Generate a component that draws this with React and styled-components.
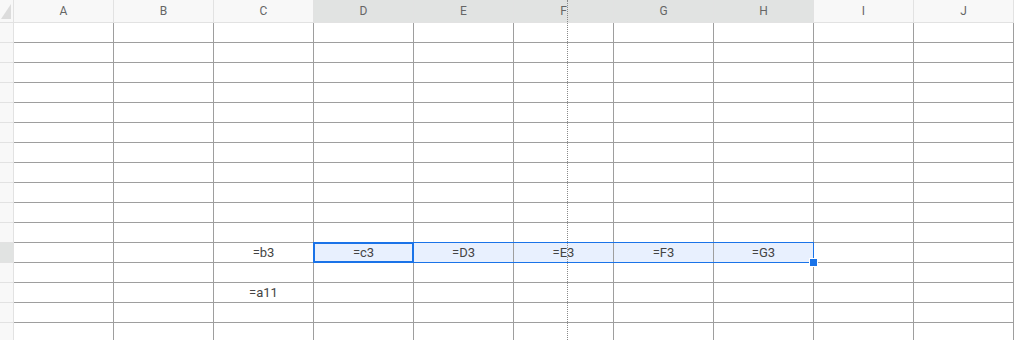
import React from 'react';
import styled, {createGlobalStyle} from 'styled-components';

const COLS = ['A', 'B', 'C', 'D', 'E', 'F', 'G', 'H', 'I', 'J'];
const ROW_COUNT = 16;
const SEL_ROW = 12;
const SEL_COLS = ['D', 'E', 'F', 'G', 'H'];
const ACTIVE = 'D12';

const data = {
  C12: '=b3',
  D12: '=c3',
  E12: '=D3',
  F12: '=E3',
  G12: '=F3',
  H12: '=G3',
  C14: '=a11',
};

const GlobalStyle = createGlobalStyle`
  html, body {
    margin: 0;
    padding: 0;
    background: #ffffff;
    overflow: hidden;
  }
  body {
    font-family: Roboto, "Liberation Sans", Arial, sans-serif;
  }
`;

const App = () => {
  const rows = [];
  for (let r = 1; r <= ROW_COUNT; r++) rows.push(r);

  return (
    <>
      <GlobalStyle/>
      <Sheet>
        <Grid>
          <Corner><CornerTriangle/></Corner>
          {COLS.map((c) => (
            <ColHead key={c} $active={SEL_COLS.includes(c)}>{c}</ColHead>
          ))}
          {rows.map((r) => (
            <React.Fragment key={r}>
              <RowHead $active={r === SEL_ROW}/>
              {COLS.map((c) => {
                const inRange = r === SEL_ROW && SEL_COLS.includes(c);
                const isLast = inRange && c === SEL_COLS[SEL_COLS.length - 1];
                return (
                  <Cell key={c + r} $inRange={inRange}>
                    {c + r === ACTIVE ? <ActiveBox/> : null}
                    {c + r === 'D12' ? <RangeBox/> : null}
                    {isLast ? <FillHandle/> : null}
                    <CellText>{data[c + r] || ''}</CellText>
                  </Cell>
                );
              })}
            </React.Fragment>
          ))}
        </Grid>
        <PageBreak/>
      </Sheet>
    </>
  );
};

export default App;

const Sheet = styled.div`
  position: relative;
  width: 1021px;
  height: 340px;
  overflow: hidden;
`;

const Grid = styled.div`
  display: grid;
  grid-template-columns: 14px repeat(10, 100px);
  grid-template-rows: 23px repeat(${ROW_COUNT}, 20px);
  width: 1014px;
`;

const Corner = styled.div`
  position: relative;
  background: #f8f8f8;
  border-right: 1px solid #e2e2e2;
  border-bottom: 1px solid #e2e2e2;
`;

const CornerTriangle = styled.div`
  position: absolute;
  right: 2px;
  bottom: 3px;
  width: 0;
  height: 0;
  border-left: 10px solid transparent;
  border-bottom: 15px solid #dcdcdc;
`;

const ColHead = styled.div`
  display: flex;
  align-items: center;
  justify-content: center;
  background: ${(p) => (p.$active ? '#e1e3e2' : '#f8f8f8')};
  border-right: 1px solid #e2e2e2;
  border-bottom: 1px solid #e2e2e2;
  color: #666666;
  font-size: 12px;
`;

const RowHead = styled.div`
  background: ${(p) => (p.$active ? '#e1e3e2' : '#f8f8f8')};
  border-right: 1px solid #e2e2e2;
  border-bottom: 1px solid #e2e2e2;
`;

const Cell = styled.div`
  position: relative;
  display: flex;
  align-items: center;
  justify-content: center;
  background: ${(p) => (p.$inRange ? '#e8f0fe' : '#ffffff')};
  border-right: 1px solid #9e9e9e;
  border-bottom: 1px solid #9e9e9e;
  font-size: 13px;
  white-space: nowrap;
`;

const CellText = styled.span`
  position: relative;
  z-index: 1;
  color: #444444;
`;

const PageBreak = styled.div`
  position: absolute;
  left: 567px;
  top: 0;
  bottom: 0;
  width: 0;
  border-left: 1px dotted #8a8a8a;
  pointer-events: none;
  z-index: 3;
`;

/* range outline spans five cells from the top-left one */
const RangeBox = styled.div`
  position: absolute;
  left: -1px;
  top: -1px;
  width: 499px;
  height: 19px;
  border: 1px solid #1a73e8;
  pointer-events: none;
  z-index: 2;
`;

const ActiveBox = styled.div`
  position: absolute;
  left: -1px;
  top: -1px;
  right: -1px;
  bottom: -1px;
  border: 2px solid #1a73e8;
  pointer-events: none;
  z-index: 2;
`;

const FillHandle = styled.div`
  position: absolute;
  right: -5px;
  bottom: -5px;
  width: 7px;
  height: 7px;
  background: #1a73e8;
  border: 1px solid #ffffff;
  z-index: 4;
`;
